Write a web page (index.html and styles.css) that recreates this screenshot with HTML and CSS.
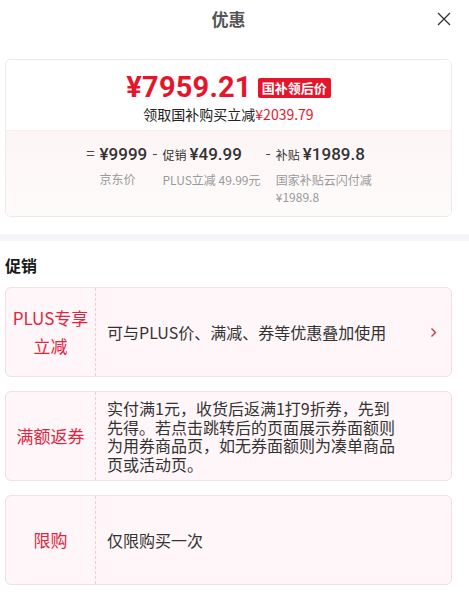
FILE: index.html
```html
<!DOCTYPE html>
<html lang="zh-CN">
<head>
    <meta charset="UTF-8">
    <meta name="viewport" content="width=device-width, initial-scale=1.0">
    <title>优惠</title>
    <link rel="stylesheet" href="styles.css">
</head>
<body>
    <div class="header">
        <div class="title">优惠</div>
        <svg class="close" width="14" height="14" viewBox="0 0 14 14">
            <path d="M1 1 L13 13 M13 1 L1 13" stroke="#333" stroke-width="1.3" fill="none"/>
        </svg>
    </div>

    <div class="section">
        <div class="price-card">
            <div class="price-top">
                <div class="price-line">
                    <span class="price">¥7959.21</span>
                    <span class="badge">国补领后价</span>
                </div>
                <div class="save">领取国补购买立减<span class="red">¥2039.79</span></div>
            </div>
            <div class="calc">
                <span class="op">=</span>
                <div class="col">
                    <div class="col-top"><span class="amount">¥9999</span></div>
                    <div class="desc">京东价</div>
                </div>
                <span class="op">-</span>
                <div class="col">
                    <div class="col-top"><span class="tag">促销</span><span class="amount">¥49.99</span></div>
                    <div class="desc">PLUS立减 49.99元</div>
                </div>
                <span class="op">-</span>
                <div class="col col-wide">
                    <div class="col-top"><span class="tag">补贴</span><span class="amount">¥1989.8</span></div>
                    <div class="desc">国家补贴云闪付减 ¥1989.8</div>
                </div>
            </div>
        </div>
    </div>

    <div class="band"></div>

    <div class="promos">
        <h2>促销</h2>
        <div class="promo">
            <div class="promo-label">PLUS专享<br>立减</div>
            <div class="promo-text">可与PLUS价、满减、券等优惠叠加使用</div>
            <svg class="arrow" width="7" height="11" viewBox="0 0 7 11">
                <path d="M1.5 1.5 L5.5 5.5 L1.5 9.5" stroke="#c8374f" stroke-width="1.4" fill="none"/>
            </svg>
        </div>
        <div class="promo">
            <div class="promo-label">满额返券</div>
            <div class="promo-text">实付满1元，收货后返满1打9折券，先到先得。若点击跳转后的页面展示券面额则为用券商品页，如无券面额则为凑单商品页或活动页。</div>
        </div>
        <div class="promo">
            <div class="promo-label">限购</div>
            <div class="promo-text">仅限购买一次</div>
        </div>
    </div>
</body>
</html>
```

FILE: styles.css
```css
body {
    margin: 0;
    width: 469px;
    font-family: "Noto Sans CJK SC", "Noto Sans", sans-serif;
    color: #333;
    background: #fff;
}

.header {
    height: 36px;
    position: relative;
    display: flex;
    justify-content: center;
    align-items: center;
}

.title {
    font-size: 17px;
    font-weight: bold;
    color: #555;
    padding-right: 12px;
}

.close {
    position: absolute;
    right: 18px;
    top: 12px;
}

.section {
    padding: 23px 17px 17px 5px;
}

.price-card {
    border: 1px solid #efe8ea;
    border-radius: 6px;
    overflow: hidden;
}

.price-top {
    padding: 10px 0 6px;
    text-align: center;
    background: #fff;
}

.price-line {
    display: flex;
    justify-content: center;
    align-items: center;
    height: 34px;
}

.price {
    font-family: Roboto, "Liberation Sans", sans-serif;
    font-weight: bold;
    font-size: 29px;
    color: #e5162c;
    letter-spacing: 0.2px;
}

.badge {
    margin-left: 6px;
    background: #e5162c;
    color: #fff;
    font-size: 13px;
    font-weight: bold;
    line-height: 20px;
    padding: 0 4px;
    border-radius: 2px;
    margin-top: 2px;
}

.save {
    font-size: 14px;
    line-height: 20px;
    color: #222;
}

.red {
    color: #e5162c;
}

.calc {
    display: flex;
    justify-content: center;
    align-items: flex-start;
    padding: 10px 0 11px;
    background: linear-gradient(to bottom, #fdf5f5, #fefbfb);
    border-top: 1px solid #f7eeee;
}

.op {
    font-size: 15px;
    line-height: 24px;
    color: #444;
    margin: 0 5px;
}

.col-top {
    line-height: 24px;
    white-space: nowrap;
}

.tag {
    font-size: 12px;
    color: #333;
    margin-right: 3px;
}

.amount {
    font-family: Roboto, "Liberation Sans", sans-serif;
    font-weight: 500;
    font-size: 17px;
    color: #333;
}

.desc {
    margin-top: 4px;
    font-size: 12px;
    line-height: 17px;
    color: #999;
    white-space: nowrap;
}

.col-wide {
    width: 100px;
}

.col-wide .desc {
    white-space: normal;
}

.band {
    height: 7px;
    background: #f5f6fa;
}

.promos {
    padding: 13px 17px 20px 5px;
}

.promos h2 {
    margin: 0 0 11px;
    font-size: 16px;
    line-height: 22px;
    font-weight: bold;
    color: #1a1a1a;
}

.promo {
    display: flex;
    align-items: center;
    height: 88px;
    margin-bottom: 14px;
    background: #fef6f8;
    border: 1px solid #f4dfe4;
    border-radius: 6px;
}

.promo-label {
    flex: 0 0 89px;
    align-self: stretch;
    display: flex;
    align-items: center;
    justify-content: center;
    text-align: center;
    border-right: 1px dashed #f0ccd5;
    font-size: 17px;
    line-height: 28px;
    color: #e0263f;
}

.promo-text {
    flex: 0 0 292px;
    padding-left: 11px;
    font-size: 16px;
    line-height: 18.5px;
    color: #333;
}

.arrow {
    margin-left: auto;
    margin-right: 14px;
}
```
